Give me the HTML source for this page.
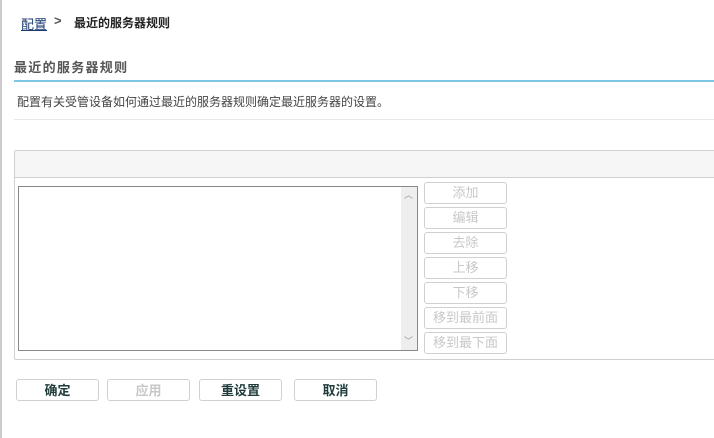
<!DOCTYPE html>
<html><head><meta charset="utf-8"><style>
*{box-sizing:border-box;margin:0;padding:0}
body{width:714px;height:438px;background:#fff;font-family:"Liberation Sans","Noto Sans CJK SC",sans-serif;position:relative;overflow:hidden;color:#333}
.lb{position:absolute;left:0;top:0;width:2px;height:438px;background:#ccc}
.a{position:absolute;white-space:nowrap}
.btn{position:absolute;border:1px solid #d0d0d0;border-radius:3px;background:#fff;font-size:13px;text-align:center;line-height:20px;height:22px;width:83px}
.rb{left:424px;color:#c8c8c8}
.bb{top:379px;font-weight:bold;color:#1f3b3b;line-height:21px}
</style></head><body>
<div class="lb"></div>
<div class="a" style="left:21px;top:14px;font-size:13px;color:#1a3a6e;text-decoration:underline">配置</div>
<div class="a" style="left:54px;top:13px;font-size:13px;color:#555;font-weight:bold">&gt;</div>
<div class="a" style="left:74px;top:14px;font-size:12px;font-weight:bold;color:#222">最近的服务器规则</div>
<div class="a" style="left:14px;top:57px;font-size:13px;font-weight:bold;color:#555;letter-spacing:1.3px">最近的服务器规则</div>
<div class="a" style="left:14px;top:80px;width:700px;height:2px;background:#7cc6e6"></div>
<div class="a" style="left:17px;top:93px;font-size:12px;color:#444">配置有关受管设备如何通过最近的服务器规则确定最近服务器的设置。</div>
<div class="a" style="left:14px;top:119px;width:700px;height:1px;background:#e8e8e8"></div>
<div class="a" style="left:14px;top:150px;width:710px;height:210px;border:1px solid #d0d0d0;border-radius:2px"></div>
<div class="a" style="left:15px;top:151px;width:699px;height:27px;background:#f6f6f6;border-bottom:1px solid #d0d0d0"></div>
<div class="a" style="left:18px;top:186px;width:400px;height:165px;border:1px solid #888"></div>
<div class="a" style="left:401px;top:187px;width:16px;height:163px;background:#eeeeee"></div>
<div class="a" style="left:404px;top:188px;font-size:9px;color:#999">︿</div>
<div class="a" style="left:404px;top:334px;font-size:9px;color:#999">﹀</div>
<div class="btn rb" style="top:182px">添加</div>
<div class="btn rb" style="top:207px">编辑</div>
<div class="btn rb" style="top:232px">去除</div>
<div class="btn rb" style="top:257px">上移</div>
<div class="btn rb" style="top:282px">下移</div>
<div class="btn rb" style="top:307px">移到最前面</div>
<div class="btn rb" style="top:332px">移到最下面</div>
<div class="btn bb" style="left:16px">确定</div>
<div class="btn bb" style="left:107px;color:#c8c8c8">应用</div>
<div class="btn bb" style="left:199px">重设置</div>
<div class="btn bb" style="left:294px">取消</div>
</body></html>
